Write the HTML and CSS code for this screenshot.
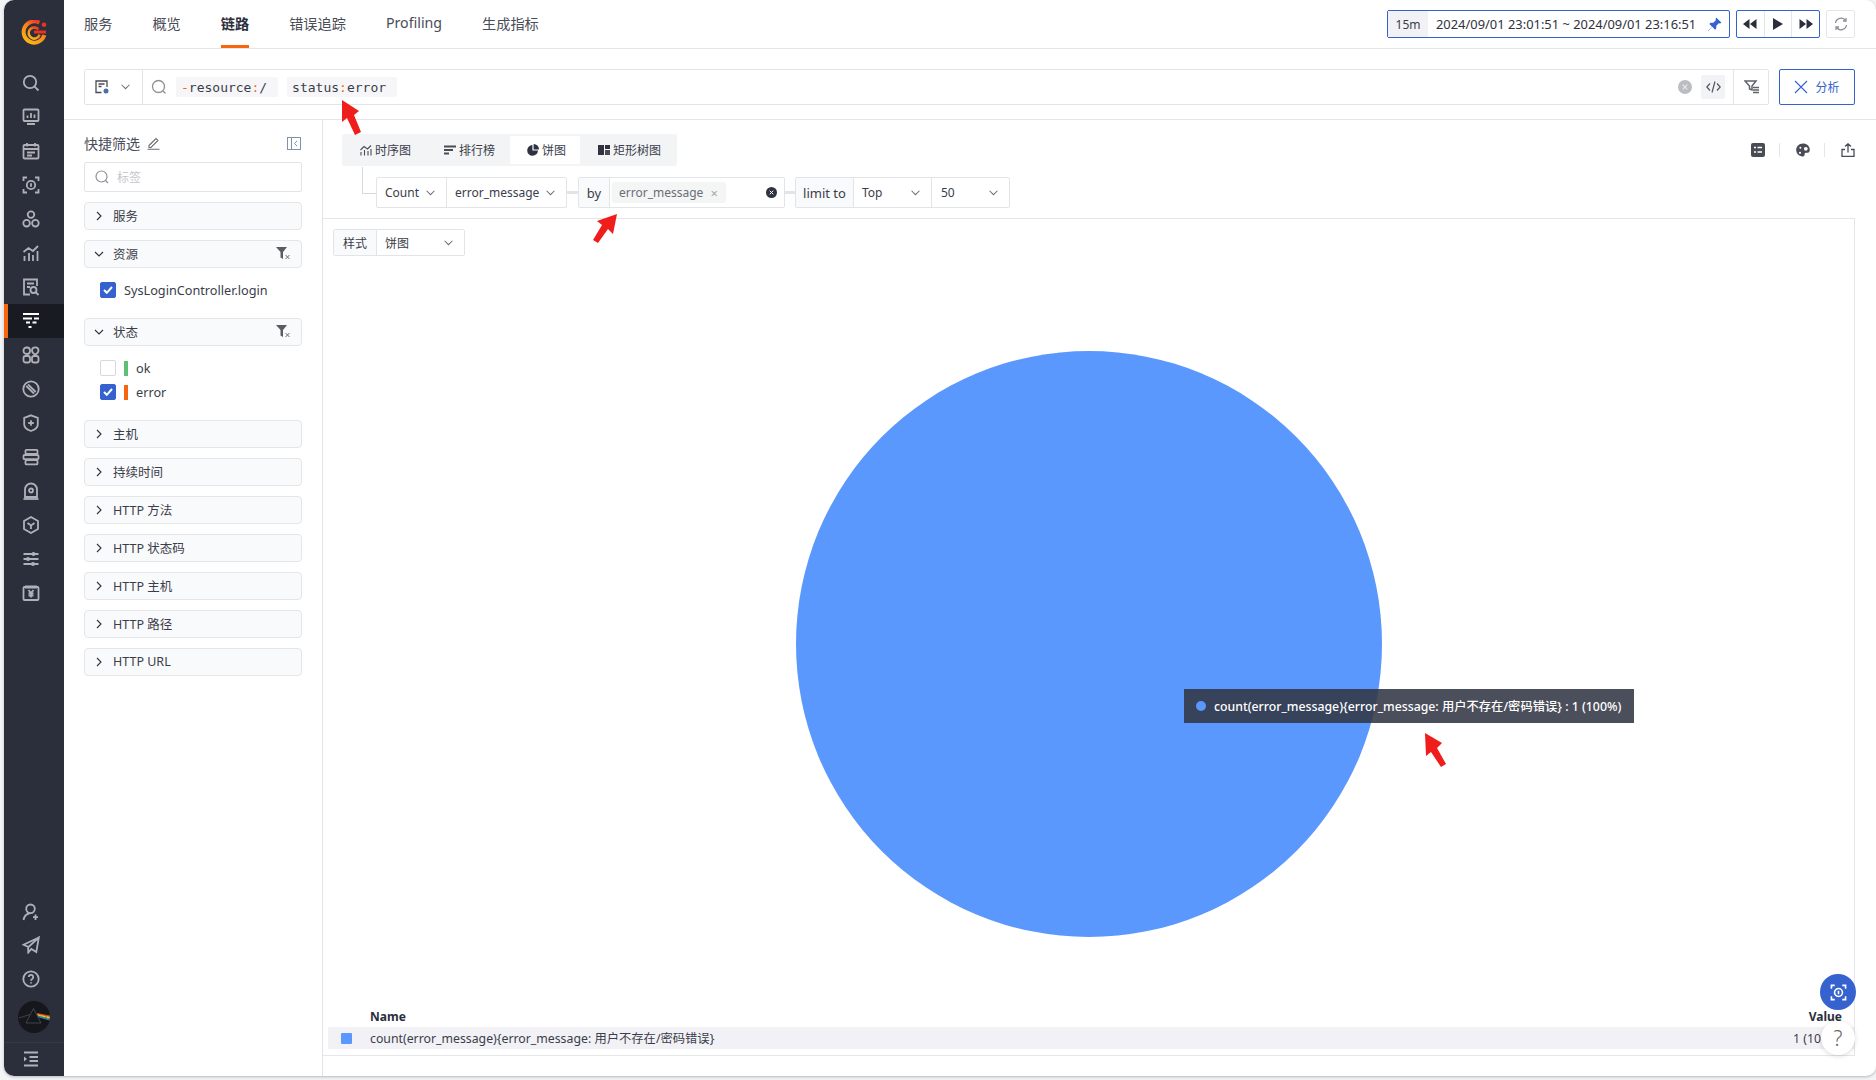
FILE: index.html
```html
<!DOCTYPE html>
<html lang="en">
<head>
    <meta charset="UTF-8">
    <title>链路</title>
    <link rel="stylesheet" href="styles.css">
</head>
<body>
<div class="frame">
    <!-- Sidebar -->
    <aside class="sidebar">
        <div class="logo">
            <svg width="26" height="26" viewBox="0 0 26 26">
                <defs>
                    <linearGradient id="logoGrad" x1="0.8" y1="0" x2="0.2" y2="1">
                        <stop offset="0" stop-color="#ea3324"/>
                        <stop offset="0.4" stop-color="#f6801c"/>
                        <stop offset="1" stop-color="#fbb616"/>
                    </linearGradient>
                </defs>
                <path d="M18.500 2.800A10.600 10.600 0 1 0 23.400 15" fill="none" stroke="url(#logoGrad)" stroke-width="4"/>
                <path d="M17.500 9.300A5.600 5.600 0 1 0 18.600 14.600" fill="none" stroke="url(#logoGrad)" stroke-width="2.600"/>
                <path d="M13 12h12" stroke="#ea3324" stroke-width="2.800"/>
                <circle cx="23" cy="4.800" r="2.300" fill="#ea3324"/>
            </svg>
        </div>
        <nav class="nav-main">
            <a class="nav-item"><svg viewBox="0 0 18 18"><circle cx="8" cy="8" r="6.200"/><path d="M12.600 12.600 16.500 16.500"/></svg></a>
            <a class="nav-item"><svg viewBox="0 0 18 18"><rect x="1.500" y="1.500" width="15" height="11.500" rx="1"/><path d="M5.500 10V7.500M9 10V5M12.500 10V6.500M5 16h8"/></svg></a>
            <a class="nav-item"><svg viewBox="0 0 18 18"><rect x="1.500" y="3" width="15" height="13.500" rx="1"/><path d="M5 1v3.500M13 1v3.500M1.500 7h15M5 10.500h8M5 13.500h5"/></svg></a>
            <a class="nav-item"><svg viewBox="0 0 18 18"><path d="M1.500 5V1.500H5M13 1.500h3.500V5M16.500 13v3.500H13M5 16.500H1.500V13"/><circle cx="9" cy="9" r="4.200"/><path d="M9 7.200v3.600"/></svg></a>
            <a class="nav-item"><svg viewBox="0 0 18 18"><circle cx="9" cy="4.600" r="3.300"/><circle cx="4.600" cy="13.200" r="3.300"/><circle cx="13.400" cy="13.200" r="3.300"/></svg></a>
            <a class="nav-item"><svg viewBox="0 0 18 18"><path d="M2.500 17v-5M7 17V9M11 17v-6M15.500 17V7M1.500 8 6.500 4l4.500 3 5-5"/></svg></a>
            <a class="nav-item"><svg viewBox="0 0 18 18"><path d="M8 16.500H2V1.500h13v6.500M5 5.500h7M5 9h3"/><circle cx="11.500" cy="12" r="3"/><path d="M13.700 14.200 16.500 17"/></svg></a>
            <a class="nav-item active"><svg viewBox="0 0 18 18"><path d="M1 2h16M1 6.500h9M12 6.500h5M4 10.500h4M10.500 10.500h4M6.500 15h3"/></svg></a>
            <a class="nav-item"><svg viewBox="0 0 18 18"><rect x="1.500" y="1.500" width="6.500" height="6.500" rx="3"/><path d="M13.200 1.300c1.900 0 3.300 1.400 3.300 3.200 0 1.900-1.600 3.200-3.300 4.200C11.500 7.700 10 6.400 10 4.500c0-1.800 1.400-3.200 3.200-3.200z"/><rect x="1.500" y="10" width="6.500" height="6.500" rx="2"/><rect x="10" y="10" width="6.500" height="6.500" rx="2"/></svg></a>
            <a class="nav-item"><svg viewBox="0 0 18 18"><circle cx="9" cy="9" r="7.700"/><path d="M4.300 6 12 13.700M6 4.300 13.700 12"/></svg></a>
            <a class="nav-item"><svg viewBox="0 0 18 18"><path d="M9 1.300 15.800 3.800v6.400c0 3.500-3 5.600-6.800 6.800-3.800-1.200-6.800-3.300-6.800-6.800V3.800z"/><path d="M9 6.200v5.600M6.200 9h5.600"/></svg></a>
            <a class="nav-item"><svg viewBox="0 0 18 18"><rect x="3.500" y="1.800" width="12" height="4.200" rx="1"/><rect x="1.500" y="7" width="15" height="4.200" rx="1"/><rect x="3.500" y="12.200" width="12" height="4.200" rx="1"/></svg></a>
            <a class="nav-item"><svg viewBox="0 0 18 18"><path d="M3 15V7.500a6 6 0 0 1 12 0V15z"/><circle cx="9" cy="8.500" r="2"/><path d="M1.500 17h15"/></svg></a>
            <a class="nav-item"><svg viewBox="0 0 18 18"><path d="M9 1 16 5v8l-7 4-7-4V5z"/><path d="M5.500 7 9 9.500 12.500 7M9 9.500V13"/></svg></a>
            <a class="nav-item"><svg viewBox="0 0 18 18"><path d="M1.500 4h15M1.500 9h15M1.500 14h15"/><circle class="solid" cx="11.500" cy="4" r="2"/><circle class="solid" cx="6" cy="9" r="2"/><circle class="solid" cx="11" cy="14" r="2"/></svg></a>
            <a class="nav-item"><svg viewBox="0 0 18 18"><rect x="1.500" y="3" width="15" height="13" rx="1"/><path class="heavy" d="M3 3h12"/><path d="M6.500 6 9 9l2.500-3M9 9v4.500M6.500 9.500h5M6.500 11.700h5"/></svg></a>
        </nav>
        <nav class="nav-bottom">
            <a class="nav-item"><svg viewBox="0 0 18 18"><circle cx="8.500" cy="5.800" r="4.300"/><path d="M1.500 17c.6-3.500 2.800-6 6-6.500M13.500 11.500v5.500M11 14.200h5"/></svg></a>
            <a class="nav-item"><svg viewBox="0 0 18 18"><path d="M16.800 1.500 1.500 8.800l5 2.200L16.800 1.500 14.300 16l-5-3-3 3.500-.2-5.500"/></svg></a>
            <a class="nav-item"><svg viewBox="0 0 18 18"><circle cx="9" cy="9" r="7.700"/><path d="M6.800 7a2.200 2.200 0 1 1 3.400 1.900c-.8.500-1.200 1-1.200 1.900M9 12.200v1.300"/></svg></a>
            <div class="avatar">
                <svg width="32" height="32" viewBox="0 0 32 32">
                    <circle cx="16" cy="16" r="16" fill="#15171c"/>
                    <path d="M15.500 7.500 23 22H8zM1 17l11-3.500" fill="none" stroke="#5d5f66" stroke-width=".6"/>
                    <path d="M19 12.500 32 15" stroke="#e8352b" stroke-width="1"/>
                    <path d="M19.300 13.300 32 16" stroke="#f7931e" stroke-width="1"/>
                    <path d="M19.600 14.100 32 17" stroke="#f5e642" stroke-width="1"/>
                    <path d="M20 14.900 31.800 18" stroke="#4caf50" stroke-width="1"/>
                    <path d="M20.300 15.700 31.500 19" stroke="#3b7dd8" stroke-width="1"/>
                </svg>
            </div>
            <a class="nav-item nav-toggle"><svg viewBox="0 0 18 18"><path d="M2 2.500h14M7.500 7h8.500M7.500 11h8.500M2 15.500h14"/><path class="solid" d="M2 6.500 5 9l-3 2.500z"/></svg></a>
        </nav>
    </aside>

    <div class="main">
        <!-- Top bar -->
        <header class="topbar">
            <nav class="tabs">
                <a>服务</a>
                <a>概览</a>
                <a class="active">链路</a>
                <a>错误追踪</a>
                <a>Profiling</a>
                <a>生成指标</a>
            </nav>
            <div class="time-tools">
                <div class="time-picker">
                    <span class="time-range">15m</span>
                    <span class="time-text">2024/09/01 23:01:51 ~ 2024/09/01 23:16:51</span>
                    <svg class="pin" width="15" height="15" viewBox="0 0 14 14"><path d="M8.800.6 13.400 5.200 12.300 6 11 5.800 8.700 8.100 8.600 10.700 7.500 11.800 4.900 9.200 1.200 13 .9 12.800 4.700 9 2.200 6.500 3.300 5.400 5.900 5.300 8.200 3 8 1.700z" fill="#3562cf"/></svg>
                </div>
                <div class="player">
                    <span><svg width="14" height="10" viewBox="0 0 14 10"><path d="M6.500 0v10L0 5zM13.500 0v10L7 5z"/></svg></span>
                    <span><svg width="10" height="12" viewBox="0 0 10 12"><path d="M0 0l10 6-10 6z"/></svg></span>
                    <span><svg width="14" height="10" viewBox="0 0 14 10"><path d="M.5 0v10L7 5zM7.500 0v10L14 5z"/></svg></span>
                </div>
                <div class="refresh">
                    <svg width="14" height="14" viewBox="0 0 14 14" fill="none" stroke="#8a8c94" stroke-width="1.300"><path d="M1.500 6A5.600 5.600 0 0 1 11.600 3.600M12.500 8A5.600 5.600 0 0 1 2.400 10.400"/><path d="M12 1v3H9M2 13v-3h3"/></svg>
                </div>
            </div>
        </header>

        <!-- Query bar -->
        <section class="query-bar">
            <div class="search-box">
                <div class="saved">
                    <svg width="14" height="14" viewBox="0 0 14 14" fill="none" stroke="#4a4c55" stroke-width="1.300"><path d="M6.500 12.500H1V1h11v6M3.500 4h6M3.500 6.500h3"/><circle cx="11" cy="11" r="2.500" fill="#4a6ea8" stroke="none"/></svg>
                    <svg class="chevron" width="8" height="5" viewBox="0 0 8 5"><path d="M.5.500 4 4l3.500-3.500"/></svg>
                </div>
                <svg class="search-icon" width="16" height="16" viewBox="0 0 16 16" fill="none" stroke="#8f9197" stroke-width="1.300"><circle cx="7.500" cy="7.500" r="6"/><path d="M12 12l2.500 2.500"/></svg>
                <div class="tokens">
                    <span class="token"><i>-</i>resource<i>:</i>/</span>
                    <span class="token">status<i>:</i>error</span>
                </div>
                <span class="clear-round">
                    <svg width="14" height="14" viewBox="0 0 14 14"><circle cx="7" cy="7" r="7" fill="#bcbdc2"/><path d="M4.700 4.700l4.600 4.600M9.300 4.700 4.700 9.300" stroke="#e8e8ea" stroke-width="1.200"/></svg>
                </span>
                <span class="code-btn">
                    <svg width="15" height="12" viewBox="0 0 15 12" fill="none" stroke="#55575f" stroke-width="1.200"><path d="M4 2.500.8 6 4 9.500M11 2.500 14.200 6 11 9.500M9 .5 6 11.500"/></svg>
                </span>
                <span class="filter-btn">
                    <svg width="15" height="14" viewBox="0 0 15 14"><path d="M1 1h11L8 6v4L5.500 9V6z" fill="none" stroke="#62646c" stroke-width="1.500"/><path d="M9 7.500h6M9 10h6M9 12.500h6" stroke="#62646c" stroke-width="1.300"/></svg>
                </span>
            </div>
            <button class="analyze-btn">
                <svg width="14" height="14" viewBox="0 0 14 14" fill="none" stroke="#3562cf" stroke-width="1.100"><path d="M1 1l12 12M13 1 1 13"/></svg>
                分析
            </button>
        </section>

        <div class="body">
            <!-- Quick filter panel -->
            <aside class="filters">
                <div class="filters-title">
                    <span>快捷筛选</span>
                    <svg width="13" height="14" viewBox="0 0 13 14" fill="none" stroke="#6a6c74" stroke-width="1.100"><path d="M2 9.500 9 2.500l2 2-7 7H2zM.5 13.300h12"/></svg>
                    <svg class="collapse" width="14" height="13" viewBox="0 0 14 13" fill="none" stroke="#7c93a8" stroke-width="1"><rect x=".5" y=".5" width="13" height="12"/><path d="M4.500.5v12M10 4 7.500 6.500 10 9"/></svg>
                </div>
                <div class="filter-search">
                    <svg width="14" height="14" viewBox="0 0 14 14" fill="none" stroke="#8f9197" stroke-width="1.200"><circle cx="6.500" cy="6.500" r="5.500"/><path d="M10.500 10.500 13 13"/></svg>
                    <span>标签</span>
                </div>

                <div class="group"><svg class="arrow" viewBox="0 0 6 10"><path d="M1 1l4 4-4 4"/></svg>服务</div>
                <div class="group open">
                    <svg class="arrow down" viewBox="0 0 10 6"><path d="M1 1l4 4 4-4"/></svg>资源
                    <svg class="clear-filter" width="15" height="13" viewBox="0 0 15 13"><path d="M0 0h11L7 5v7L4.500 10.500V5z" fill="#5a5c64"/><path d="M9.500 8l4 4M13.500 8l-4 4" stroke="#5a5c64" stroke-width=".9"/></svg>
                </div>
                <div class="group-items">
                    <label class="item">
                        <span class="check on"><svg width="10" height="8" viewBox="0 0 10 8"><path d="M1 4l2.800 2.800L9 1" fill="none" stroke="#fff" stroke-width="2"/></svg></span>
                        SysLoginController.login
                    </label>
                </div>
                <div class="group open">
                    <svg class="arrow down" viewBox="0 0 10 6"><path d="M1 1l4 4 4-4"/></svg>状态
                    <svg class="clear-filter" width="15" height="13" viewBox="0 0 15 13"><path d="M0 0h11L7 5v7L4.500 10.500V5z" fill="#5a5c64"/><path d="M9.500 8l4 4M13.500 8l-4 4" stroke="#5a5c64" stroke-width=".9"/></svg>
                </div>
                <div class="group-items">
                    <label class="item"><span class="check"></span><span class="status-bar ok"></span>ok</label>
                    <label class="item">
                        <span class="check on"><svg width="10" height="8" viewBox="0 0 10 8"><path d="M1 4l2.800 2.800L9 1" fill="none" stroke="#fff" stroke-width="2"/></svg></span>
                        <span class="status-bar error"></span>error
                    </label>
                </div>
                <div class="group"><svg class="arrow" viewBox="0 0 6 10"><path d="M1 1l4 4-4 4"/></svg>主机</div>
                <div class="group"><svg class="arrow" viewBox="0 0 6 10"><path d="M1 1l4 4-4 4"/></svg>持续时间</div>
                <div class="group"><svg class="arrow" viewBox="0 0 6 10"><path d="M1 1l4 4-4 4"/></svg>HTTP 方法</div>
                <div class="group"><svg class="arrow" viewBox="0 0 6 10"><path d="M1 1l4 4-4 4"/></svg>HTTP 状态码</div>
                <div class="group"><svg class="arrow" viewBox="0 0 6 10"><path d="M1 1l4 4-4 4"/></svg>HTTP 主机</div>
                <div class="group"><svg class="arrow" viewBox="0 0 6 10"><path d="M1 1l4 4-4 4"/></svg>HTTP 路径</div>
                <div class="group"><svg class="arrow" viewBox="0 0 6 10"><path d="M1 1l4 4-4 4"/></svg>HTTP URL</div>
            </aside>

            <!-- Analysis content -->
            <section class="content">
                <div class="analysis-head">
                    <div class="chart-tabs-row">
                        <div class="chart-tabs">
                            <a class="tab-time"><svg width="12" height="12" viewBox="0 0 12 12" fill="none" stroke="#4a4c55" stroke-width="1.100"><path d="M1 11.500V8M4.500 11.500V6M8 11.500V7M11 11.500V5M.5 6 4 2.500 7.500 5 11 1.500"/></svg>时序图</a>
                            <a class="tab-rank"><svg width="12" height="12" viewBox="0 0 12 12"><path d="M0 1.500h12v2H0zM0 5h9v2H0zM0 8.500h5v2H0z" fill="#4a4c55"/></svg>排行榜</a>
                            <a class="tab-pie active"><svg width="12" height="12" viewBox="0 0 12 12"><path d="M5.400 1A5.400 5.400 0 1 0 11 6.600H5.400z" fill="#2f3240"/><path d="M6.600 0A5.400 5.400 0 0 1 12 5.400H6.600z" fill="#2f3240"/></svg>饼图</a>
                            <a class="tab-tree"><svg width="12" height="12" viewBox="0 0 12 12"><path d="M0 1h6v10H0zM7 1h5v4H7z" fill="#2f3240"/><path d="M7 6h5v5H7z" fill="#4a4c55"/></svg>矩形树图</a>
                        </div>
                        <div class="chart-actions">
                            <svg width="14" height="14" viewBox="0 0 14 14"><rect width="14" height="14" rx="2" fill="#4a4c55"/><path d="M3 4.500h2M6.500 4.500H11M3 9h2M6.500 9H11" stroke="#fff" stroke-width="1.400"/></svg>
                            <span class="sep"></span>
                            <svg width="14" height="14" viewBox="0 0 14 14"><path d="M7 .5c3.800 0 6.800 2.600 6.800 6.200 0 2.400-1.700 3.300-3.300 3.100-1.300-.1-2 .5-1.900 1.500.2 1.400-.7 2.400-2.100 2.200C3 13.200.2 10.500.2 7 .2 3.400 3.200.5 7 .5z" fill="#4a4c55"/><circle cx="9.800" cy="5.800" r="1.900" fill="#fff"/><circle cx="4" cy="9.800" r="1.100" fill="#fff"/><circle cx="4.400" cy="4.800" r="1" fill="#fff"/></svg>
                            <span class="sep"></span>
                            <svg width="14" height="14" viewBox="0 0 14 14" fill="none" stroke="#4a4c55" stroke-width="1.300"><path d="M7 9.500V1M4 3.500 7 .8l3 2.700M4 6.500H1v7h12v-7h-3"/></svg>
                        </div>
                    </div>
                    <div class="query-row">
                        <div class="q-group">
                            <span class="q-cell w-count">Count<svg class="chevron" width="8" height="5" viewBox="0 0 8 5"><path d="M.5.500 4 4l3.500-3.500"/></svg></span>
                            <span class="q-cell w-field">error_message<svg class="chevron" width="8" height="5" viewBox="0 0 8 5"><path d="M.5.500 4 4l3.500-3.500"/></svg></span>
                        </div>
                        <span class="q-link"></span>
                        <div class="q-group">
                            <span class="q-cell q-label q-label-en w-by">by</span>
                            <span class="q-cell w-tags">
                                <span class="q-tag">error_message<em>×</em></span>
                                <svg class="q-clear" width="11" height="11" viewBox="0 0 11 11"><circle cx="5.500" cy="5.500" r="5.500" fill="#2f3240"/><path d="M3.700 3.700l3.600 3.600M7.300 3.700 3.700 7.300" stroke="#fff"/></svg>
                            </span>
                        </div>
                        <span class="q-link q-link-short"></span>
                        <div class="q-group">
                            <span class="q-cell q-label q-label-en w-limit">limit to</span>
                            <span class="q-cell w-top">Top<svg class="chevron" width="8" height="5" viewBox="0 0 8 5"><path d="M.5.500 4 4l3.500-3.500"/></svg></span>
                            <span class="q-cell w-num">50<svg class="chevron" width="8" height="5" viewBox="0 0 8 5"><path d="M.5.500 4 4l3.500-3.500"/></svg></span>
                        </div>
                    </div>
                </div>

                <div class="chart-box">
                    <div class="style-row">
                        <div class="q-group small">
                            <span class="q-cell q-label w-style">样式</span>
                            <span class="q-cell w-type">饼图<svg class="chevron" width="8" height="5" viewBox="0 0 8 5"><path d="M.5.500 4 4l3.500-3.500"/></svg></span>
                        </div>
                    </div>
                    <div class="chart">
                        <svg width="586" height="586" viewBox="0 0 586 586"><circle cx="293" cy="293" r="293" fill="#5b98fe"/></svg>
                        <div class="tooltip"><i></i>count(error_message){error_message: 用户不存在/密码错误} : 1 (100%)</div>
                    </div>
                    <div class="legend">
                        <div class="legend-head"><span>Name</span><span>Value</span></div>
                        <div class="legend-row">
                            <i></i>
                            <span>count(error_message){error_message: 用户不存在/密码错误}</span>
                            <span class="legend-value">1 (100%)</span>
                        </div>
                    </div>
                </div>
                <div class="content-foot"></div>
            </section>
        </div>
    </div>

    <!-- Floating buttons -->
    <div class="float-btn scan">
        <svg width="17" height="17" viewBox="0 0 18 18" fill="none" stroke="#fff" stroke-width="1.700"><path d="M1.500 5V1.500H5M13 1.500h3.500V5M16.500 13v3.500H13M5 16.500H1.500V13"/><circle cx="9" cy="9" r="4.200"/><path d="M9 7.200v3.600"/></svg>
    </div>
    <div class="float-btn help">?</div>

    <!-- Red annotation arrows -->
    <svg class="marks" width="1876" height="1080" viewBox="0 0 1876 1080">
        <path d="M342 100 359 111 354 115 361 132 355 135 347 118 342 122z"/>
        <path d="M617 214 613 234 608 229 598 243 593 240 602 225 597 221z"/>
        <path d="M1425 733 1442 743 1437 748 1446 764 1441 767 1431 752 1426 756z"/>
    </svg>
</div>
</body>
</html>
```

FILE: styles.css
```css
/* General */
* {
    box-sizing: border-box;
}
body {
    margin: 0;
    height: 1080px;
    overflow: hidden;
    background: #f3f4f6;
    font-family: "Noto Sans", "Noto Sans CJK SC", sans-serif;
    font-size: 12px;
    color: #3a3d4a;
}
.frame {
    position: relative;
    display: flex;
    height: 1076px;
    margin-left: 4px;
    background: #fff;
    border-radius: 10px;
    box-shadow: 0 1px 3px rgba(0, 0, 0, 0.25);
    overflow: hidden;
}

/* Sidebar */
.sidebar {
    flex: 0 0 60px;
    display: flex;
    flex-direction: column;
    background: #2b2e3b;
}
.logo {
    height: 66px;
    display: flex;
    align-items: center;
    justify-content: center;
}
.nav-main {
    flex: 1;
}
.nav-item {
    display: flex;
    align-items: center;
    justify-content: center;
    height: 34px;
    padding-right: 6px;
}
.nav-item svg {
    width: 18px;
    height: 18px;
    fill: none;
    stroke: #b0b1b8;
    stroke-width: 1.8;
}
.nav-item svg .solid {
    fill: #b0b1b8;
    stroke: none;
}
.nav-item svg .heavy {
    stroke-width: 3;
}
.nav-item.active {
    background: #191b22;
    border-left: 4px solid #f5660f;
    padding-right: 10px;
}
.nav-item.active svg {
    stroke: #fff;
    stroke-width: 2;
}
.nav-bottom {
    display: flex;
    flex-direction: column;
    height: 181px;
}
.avatar {
    display: flex;
    justify-content: center;
    padding: 5px 0 9px;
    border-bottom: 1px solid #353845;
}
.nav-toggle {
    height: 34px;
}

/* Main column */
.main {
    flex: 1;
    min-width: 0;
    display: flex;
    flex-direction: column;
}

/* Top bar */
.topbar {
    flex: 0 0 49px;
    display: flex;
    justify-content: space-between;
    align-items: center;
    padding: 0 21px 0 20px;
    border-bottom: 1px solid #e5e6ea;
}
.tabs {
    display: flex;
    gap: 40px;
    height: 100%;
}
.tabs a {
    display: flex;
    align-items: center;
    height: 48px;
    font-size: 14.2px;
    color: #4a4c57;
    border-bottom: 3px solid transparent;
}
.tabs a.active {
    font-weight: 600;
    color: #2b2e3b;
    border-bottom-color: #f5660f;
}
.time-tools {
    display: flex;
    gap: 6px;
    height: 28px;
}
.time-picker {
    display: flex;
    align-items: center;
    width: 343px;
    border: 1px solid #3562cf;
    border-radius: 2px;
}
.time-range {
    width: 40px;
    height: 100%;
    display: flex;
    align-items: center;
    justify-content: center;
    background: #f2f2f6;
}
.time-text {
    margin-left: 8px;
    font-size: 12.9px;
    white-space: nowrap;
    color: #2f3240;
}
.pin {
    margin-left: auto;
    margin-right: 7px;
}
.player {
    display: flex;
    width: 84px;
    border: 1px solid #3562cf;
    border-radius: 2px;
}
.player span {
    flex: 1;
    display: flex;
    align-items: center;
    justify-content: center;
    border-left: 1px solid #e5e6ea;
}
.player span:first-child {
    border-left: none;
}
.player svg {
    fill: #2b2e3b;
}
.refresh {
    width: 29px;
    display: flex;
    align-items: center;
    justify-content: center;
    border: 1px solid #e5e6ea;
    border-radius: 2px;
}

/* Query bar */
.query-bar {
    flex: 0 0 71px;
    display: flex;
    gap: 10px;
    padding: 20px 21px 14px 20px;
    border-bottom: 1px solid #e5e6ea;
}
.search-box {
    flex: 1;
    display: flex;
    align-items: center;
    border: 1px solid #e3e4e8;
    border-radius: 2px;
}
.saved {
    flex: 0 0 58px;
    height: 100%;
    display: flex;
    align-items: center;
    gap: 12px;
    padding-left: 10px;
    border-right: 1px solid #e3e4e8;
}
.chevron {
    width: 9px;
    height: 6px;
    fill: none;
    stroke: #6b6d76;
    stroke-width: 0.9;
}
.search-icon {
    margin-left: 8px;
}
.tokens {
    display: flex;
    gap: 9px;
    margin-left: 9px;
    font-family: "DejaVu Sans Mono", monospace;
    font-size: 13px;
    color: #3a3d4a;
}
.token {
    display: flex;
    align-items: center;
    height: 20px;
    padding: 0 11px 0 5px;
    background: #f6f6f8;
    border-radius: 2px;
}
.token i {
    font-style: normal;
    color: #f5660f;
}
.clear-round {
    display: flex;
    margin-left: auto;
}
.code-btn {
    width: 24px;
    height: 24px;
    margin-left: 9px;
    display: flex;
    align-items: center;
    justify-content: center;
    background: #f2f3f6;
    border-radius: 2px;
}
.filter-btn {
    width: 35px;
    height: 100%;
    margin-left: 8px;
    display: flex;
    align-items: center;
    justify-content: center;
    border-left: 1px solid #e3e4e8;
}
.analyze-btn {
    width: 76px;
    display: flex;
    align-items: center;
    justify-content: center;
    gap: 7px;
    padding: 0;
    background: #fff;
    border: 1px solid #3562cf;
    border-radius: 2px;
    color: #3562cf;
    font-family: inherit;
    font-size: 12px;
}

/* Body */
.body {
    flex: 1;
    min-height: 0;
    display: flex;
}

/* Quick filter panel */
.filters {
    flex: 0 0 259px;
    display: flex;
    flex-direction: column;
    gap: 10px;
    padding: 14px 20px 0;
    border-right: 1px solid #e3e4e8;
}
.filters-title {
    display: flex;
    align-items: center;
    gap: 7px;
    height: 20px;
    padding-bottom: 2px;
    margin-bottom: -2px;
    font-size: 14px;
    color: #4a4c57;
}
.collapse {
    margin-left: auto;
    margin-right: 1px;
}
.filter-search {
    display: flex;
    align-items: center;
    gap: 8px;
    height: 30px;
    padding-left: 10px;
    border: 1px solid #e3e4e8;
    border-radius: 2px;
    color: #c4c6cc;
}
.group {
    display: flex;
    align-items: center;
    height: 28px;
    padding: 0 0 1px 11px;
    background: #f9fafb;
    border: 1px solid #e5e6ea;
    border-radius: 4px;
    font-size: 12.5px;
    color: #3a3d4a;
}
.arrow {
    width: 6px;
    height: 10px;
    margin-right: 11px;
    fill: none;
    stroke: #2f3240;
    stroke-width: 1.1;
}
.arrow.down {
    width: 10px;
    height: 6px;
    margin-left: -2px;
    margin-right: 9px;
}
.clear-filter {
    margin-left: auto;
    margin-right: 10px;
}
.group-items {
    display: flex;
    flex-direction: column;
    padding-bottom: 6px;
}
.item {
    display: flex;
    align-items: center;
    height: 24px;
    padding-left: 16px;
    font-size: 12.7px;
    color: #3a3d4a;
}
.check {
    flex: 0 0 16px;
    height: 16px;
    display: flex;
    align-items: center;
    justify-content: center;
    margin-right: 8px;
    background: #fff;
    border: 1px solid #d8d9de;
    border-radius: 2px;
}
.check.on {
    background: #3562cf;
    border-color: #3562cf;
}
.status-bar {
    width: 4px;
    height: 15px;
    margin-right: 8px;
}
.status-bar.ok {
    background: #5fbf74;
}
.status-bar.error {
    background: #f5660f;
}

/* Analysis content */
.content {
    flex: 1;
    min-width: 0;
    display: flex;
    flex-direction: column;
}
.analysis-head {
    flex: 0 0 98px;
    padding: 14px 21px 0 19px;
}
.chart-tabs-row {
    display: flex;
    justify-content: space-between;
    align-items: center;
}
.chart-tabs {
    display: flex;
    align-items: center;
    width: 335px;
    height: 32px;
    padding: 0 2px;
    background: #f3f4f6;
    border-radius: 2px;
}
.chart-tabs a {
    height: 28px;
    display: flex;
    align-items: center;
    gap: 3px;
    white-space: nowrap;
    color: #3a3d4a;
    border-radius: 2px;
}
.tab-time {
    width: 84px;
    padding-left: 16px;
}
.tab-rank {
    width: 82px;
    padding-left: 16px;
}
.tab-pie {
    width: 70px;
    padding-left: 17px;
}
.tab-tree {
    padding-left: 18px;
}
.chart-tabs a.active {
    background: #fff;
}
.chart-actions {
    display: flex;
    align-items: center;
    gap: 14px;
}
.chart-actions .sep {
    width: 1px;
    height: 14px;
    margin-right: 2px;
    background: #e5e6ea;
}
.query-row {
    position: relative;
    display: flex;
    align-items: center;
    margin: 11px 0 0 34px;
}
.query-row::before {
    content: "";
    position: absolute;
    left: -14px;
    top: -10px;
    width: 14px;
    height: 26px;
    border-left: 1px solid #d8d9de;
    border-bottom: 1px solid #d8d9de;
}
.q-group {
    display: flex;
    height: 31px;
    border: 1px solid #e3e4e8;
    border-radius: 2px;
}
.q-group.small {
    width: fit-content;
    height: 27px;
}
.q-link {
    width: 11px;
    height: 3px;
    background: #e3e4e8;
}
.q-link-short {
    width: 10px;
}
.q-cell {
    position: relative;
    display: flex;
    align-items: center;
    justify-content: space-between;
    padding: 0 11px 0 8px;
    border-left: 1px solid #e3e4e8;
    color: #3a3d4a;
}
.q-cell:first-child {
    border-left: none;
}
.q-label {
    justify-content: center;
    padding: 0;
    background: #f9fafb;
}
.q-label-en {
    font-size: 13px;
}
.w-count {
    width: 69px;
}
.w-field {
    width: 120px;
}
.w-by {
    width: 30px;
}
.w-tags {
    width: 175px;
    padding: 0 2px;
}
.q-tag {
    display: flex;
    align-items: center;
    justify-content: space-between;
    width: 114px;
    height: 21px;
    padding: 0 8px 0 7px;
    background: #f4f5f5;
    border-radius: 3px;
    color: #6b6d76;
}
.q-tag em {
    font-style: normal;
    font-size: 13px;
    color: #a5a7ae;
}
.q-clear {
    margin-right: 5px;
}
.w-limit {
    width: 57px;
}
.w-top {
    width: 78px;
}
.w-num {
    width: 78px;
    padding-left: 9px;
}
.w-style {
    width: 42px;
}
.w-type {
    width: 88px;
}

/* Chart box */
.chart-box {
    flex: 1;
    min-height: 0;
    display: flex;
    flex-direction: column;
    margin-right: 21px;
    border-top: 1px solid #e5e6ea;
    border-right: 1px solid #e5e6ea;
    border-bottom: 1px solid #e5e6ea;
}
.style-row {
    padding: 10px 0 0 10px;
}
.chart {
    position: relative;
    flex: 1;
    min-height: 0;
    display: flex;
    align-items: center;
    justify-content: center;
    padding-top: 24px;
}
.tooltip {
    position: absolute;
    left: 861px;
    top: 433px;
    display: flex;
    align-items: center;
    width: 450px;
    height: 34px;
    padding-left: 12px;
    background: rgba(50, 53, 68, 0.88);
    font-size: 12.3px;
    font-weight: 500;
    color: #fff;
    white-space: pre;
}
.tooltip i {
    width: 10px;
    height: 10px;
    margin-right: 8px;
    border-radius: 50%;
    background: #5b98fe;
}
.legend {
    padding: 0 0 6px 5px;
    font-size: 12.3px;
}
.legend-head {
    display: flex;
    justify-content: space-between;
    align-items: center;
    height: 20px;
    padding: 0 12px 2px 42px;
    font-size: 12px;
    font-weight: 700;
    color: #2b2e3b;
}
.legend-row {
    display: flex;
    align-items: center;
    height: 22px;
    padding: 0 12px 0 13px;
    background: #f2f2f6;
}
.legend-row i {
    width: 11px;
    height: 11px;
    margin-right: 18px;
    border-radius: 1px;
    background: #5b98fe;
}
.legend-value {
    margin-left: auto;
}
.content-foot {
    flex: 0 0 20px;
}

/* Floating buttons */
.float-btn {
    position: absolute;
    display: flex;
    align-items: center;
    justify-content: center;
    border-radius: 50%;
}
.float-btn.scan {
    left: 1816px;
    top: 974px;
    width: 36px;
    height: 36px;
    background: #3562cf;
}
.float-btn.help {
    left: 1817px;
    top: 1021px;
    width: 34px;
    height: 34px;
    background: #fff;
    box-shadow: 0 1px 5px rgba(0, 0, 0, 0.15);
    font-size: 21px;
    font-weight: 300;
    color: #666;
}

/* Annotation arrows */
.marks {
    position: absolute;
    left: -4px;
    top: 0;
    fill: #f01d1d;
    pointer-events: none;
}
```
